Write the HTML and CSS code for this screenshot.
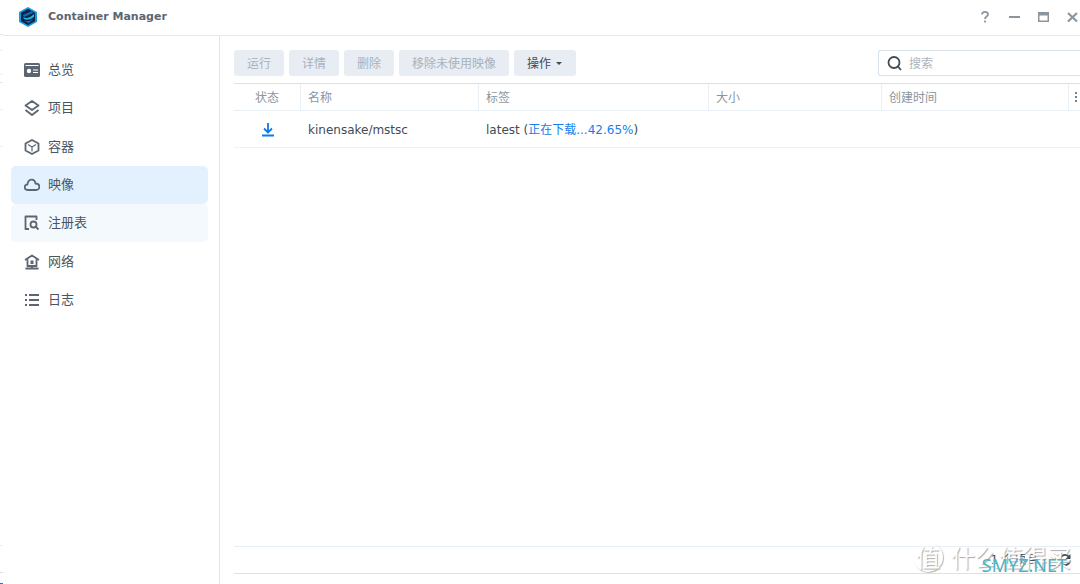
FILE: index.html
```html
<!DOCTYPE html>
<html lang="zh-CN">
<head>
<meta charset="utf-8">
<title>Container Manager</title>
<link rel="stylesheet" href="styles.css">
</head>
<body>
<div class="desktop">
  <svg class="backdrop" width="3" height="584" viewBox="0 0 3 584" aria-hidden="true">
    <path d="M0 34.500h3M0 82.500h3" stroke="#dfe9f1"/>
    <path d="M0 49.500l3 1M0 74.500l3-1M0 109.500h3M0 146.500h3M0 545.500h3" stroke="#eceff2"/>
    <path d="M0 572.500h3" stroke="#d9dfe4"/>
    <path d="M0 583.500h3" stroke="#456a9a"/>
  </svg>
  <div class="window">
    <header class="titlebar">
      <svg class="logo" width="20" height="22" viewBox="0 0 20 22" aria-hidden="true">
        <path d="M10 2l8 4.500v9L10 20l-8-4.500v-9z" fill="#063a68" stroke="#1699e0" stroke-width="2" stroke-linejoin="round"/>
        <path d="M10 3l7 4v8l-7 4-7-4V7z" fill="#0a2547"/>
        <path d="M5 9l9-4 1 2-9 4z" fill="#176ab0"/>
        <path d="M5 11q5 3 11-3v3q-5 4-10 2z" fill="#26b7df"/>
        <path d="M6 15q5 1 9-2l-4 4z" fill="#1475c4"/>
      </svg>
      <h1 class="title">Container Manager</h1>
      <div class="controls">
        <button class="control" aria-label="帮助"><svg width="12" height="14" viewBox="0 0 12 14"><path d="M3 4.500C3 1 9 1 9 4.500 9 6.500 6 6.500 6 9M6 10.500v2" fill="none" stroke="#8b959e" stroke-width="1.800"/></svg></button>
        <button class="control" aria-label="最小化"><svg width="12" height="14" viewBox="0 0 12 14"><path d="M1 7h11" stroke="#8b959e" stroke-width="2"/></svg></button>
        <button class="control" aria-label="最大化"><svg width="12" height="14" viewBox="0 0 12 14"><path d="M1 2h11v10H1z" fill="#8b959e"/><path d="M2.500 5.500h8v5h-8z" fill="#fff"/></svg></button>
        <button class="control" aria-label="关闭"><svg width="12" height="14" viewBox="0 0 12 14"><path d="M2 3l9 8.500M11 3l-9 8.500" stroke="#8b959e" stroke-width="2.200"/></svg></button>
      </div>
    </header>
    <div class="body">
      <nav class="sidebar">
        <a class="nav-item" href="#"><svg class="icon" viewBox="0 0 16 16"><rect y="1" width="16" height="14" rx="1.500" fill="#5b6672"/><path d="M1.500 3.500h13" stroke="#fff"/><circle cx="5" cy="9" r="2.200" fill="#fff"/><path d="M9 8h5M9 10.500h5" stroke="#fff"/></svg>总览</a>
        <a class="nav-item" href="#"><svg class="icon line" viewBox="0 0 16 16"><path d="M8 1l6.500 4.500L8 10 1.500 5.500zM1.500 10L8 15l6.500-5"/></svg>项目</a>
        <a class="nav-item" href="#"><svg class="icon line" viewBox="0 0 16 16"><path d="M8 1l6.500 3.500v7L8 15l-6.500-3.500v-7z"/><path d="M4 5.500L8 8l4-2.500M8 8v4.500" stroke-width="1.200"/></svg>容器</a>
        <a class="nav-item selected" href="#" aria-current="page"><svg class="icon line" viewBox="0 0 16 16"><path d="M4 13C-.3 13-.3 7.500 3.500 7.500 4 1.500 10.500 1 11.500 6.500 16.500 6.500 16.500 13 12 13z"/></svg>映像</a>
        <a class="nav-item hovered" href="#"><svg class="icon line" viewBox="0 0 16 16"><path d="M5 14H1.500V1.500h11V5"/><circle cx="9.500" cy="9.500" r="3"/><path d="M11.500 11.500l3 3"/></svg>注册表</a>
        <a class="nav-item" href="#"><svg class="icon line" viewBox="0 0 16 16"><path d="M1 6l7-4.500L15 6M3.500 5.500V12h9V5.500M1.500 14.500h13M8 12v2"/><path d="M6.500 6.500h3v3.500h-3z" fill="#5b6672" stroke="none"/></svg>网络</a>
        <a class="nav-item" href="#"><svg class="icon line" viewBox="0 0 16 16"><path d="M1 3h2M5 3h10M1 8h2M5 8h10M1 13h2M5 13h10"/></svg>日志</a>
      </nav>
      <main class="content">
        <div class="toolbar">
          <button class="btn" disabled>运行</button>
          <button class="btn" disabled>详情</button>
          <button class="btn" disabled>删除</button>
          <button class="btn" disabled>移除未使用映像</button>
          <button class="btn">操作<svg class="caret" width="6" height="3" viewBox="0 0 6 3" aria-hidden="true"><path d="M0 0h6L3 3z" fill="#414b55"/></svg></button>
          <label class="search">
            <svg width="16" height="16" viewBox="0 0 16 16" aria-hidden="true"><circle cx="7" cy="7.500" r="5.500" fill="none" stroke="#414b55" stroke-width="1.800"/><path d="M10.500 11l3.500 4" stroke="#414b55" stroke-width="1.800"/></svg>
            <input class="search-input" type="text" placeholder="搜索" aria-label="搜索">
          </label>
        </div>
        <table class="images">
          <colgroup><col class="col-status"><col class="col-name"><col class="col-tag"><col class="col-size"><col><col class="col-menu"></colgroup>
          <thead>
            <tr><th class="status">状态</th><th>名称</th><th>标签</th><th>大小</th><th>创建时间</th><th class="menu"><button class="more" aria-label="更多列"><svg width="4" height="12" viewBox="0 0 4 12"><path d="M0 1h2v2H0zM0 5h2v2H0zM0 9h2v2H0z" fill="#75808a"/></svg></button></th></tr>
          </thead>
          <tbody>
            <tr><td class="status"><svg class="download" width="14" height="14" viewBox="0 0 14 14" role="img" aria-label="下载中"><path d="M7 0v9M3 5.500l4 4 4-4M1 12.500h12" fill="none" stroke="#0c7bea" stroke-width="1.800"/></svg></td><td>kinensake/mstsc</td><td>latest (<span class="progress">正在下载...42.65%</span>)</td><td></td><td></td><td></td></tr>
          </tbody>
        </table>
        <footer class="footer">
          <span>1 个项目</span>
          <button class="refresh" aria-label="刷新"><svg width="14" height="14" viewBox="0 0 14 14"><path d="M2 6.500A5 5 0 0 1 11 4M12 7.500A5 5 0 0 1 3 10" fill="none" stroke="#414b55" stroke-width="1.800"/><path d="M12.500 1v5h-5zM1.500 13V8h5z" fill="#414b55"/></svg></button>
        </footer>
      </main>
    </div>
  </div>
  <div class="watermark"><span class="seal">值</span><span>什么值得买</span></div>
  <div class="site">SMYZ.NET</div>
</div>
</body>
</html>
```

FILE: styles.css
```css
* { box-sizing: border-box; }

body {
  margin: 0;
  background: #fff;
  color: #414b55;
  font: 12px/18px "DejaVu Sans", "Noto Sans CJK SC", sans-serif;
}

button, input { font: inherit; color: inherit; }
button { border: 0; padding: 0; background: none; }

.desktop {
  position: relative;
  display: flex;
  height: 100vh;
  overflow: hidden;
}

.backdrop { flex: none; }

.window {
  flex: 1;
  min-width: 0;
  display: flex;
  flex-direction: column;
}

.titlebar {
  display: flex;
  align-items: center;
  height: 36px;
  padding: 0 2px 1px 15px;
  border-bottom: 1px solid #e3ebf2;
}

.title {
  margin: 0 0 0 10px;
  font-size: 11px;
  font-weight: bold;
  color: #5b6672;
}

.controls {
  display: flex;
  gap: 17px;
  margin-left: auto;
}

.control { display: flex; }

.body {
  flex: 1;
  min-height: 0;
  display: flex;
}

.sidebar {
  flex: none;
  display: grid;
  grid-template-rows: repeat(7, 1fr);
  align-content: start;
  width: 217px;
  padding: 15px 11px 265px 8px;
  border-right: 1px solid #dde7ef;
}

.nav-item {
  display: flex;
  align-items: center;
  gap: 8px;
  padding-left: 13px;
  border-radius: 5px;
  font-size: 13px;
  color: #4b555f;
  text-decoration: none;
}

.selected { background: #e3f0fd; }
.hovered { background: #f4f9fe; }

.icon { width: 16px; height: 16px; }

.line {
  fill: none;
  stroke: #5b6672;
  stroke-width: 1.8;
  stroke-linejoin: round;
}

.content {
  flex: 1;
  min-width: 0;
  display: flex;
  flex-direction: column;
  padding: 14px 0 10px 14px;
}

.toolbar {
  display: flex;
  gap: 5px;
  padding-bottom: 7px;
}

.btn {
  height: 26px;
  padding: 2px 13px 0;
  border-radius: 3px;
  background: #e7edf3;
}

.btn:disabled { color: #a9b2bb; }

.caret { margin: 0 1px 2px 5px; vertical-align: middle; }

.search {
  display: flex;
  align-items: center;
  gap: 6px;
  width: 202px;
  height: 26px;
  margin-left: auto;
  padding-left: 8px;
  border: 1px solid #d7e1ea;
  border-right: 0;
  border-radius: 3px 0 0 3px;
}

.search-input {
  flex: 1;
  min-width: 0;
  padding: 2px 0 0;
  border: 0;
  outline: 0;
  background: none;
}

.search-input::placeholder { color: #adb5bd; }

.images {
  width: 100%;
  table-layout: fixed;
  border-collapse: separate;
  border-spacing: 0;
  border-top: 1px solid #d7e3ec;
}

.col-status { width: 67px; }
.col-name { width: 178px; }
.col-tag { width: 230px; }
.col-size { width: 173px; }
.col-menu { width: 11px; }

.images th {
  height: 27px;
  padding: 2px 0 0 7px;
  border-right: 1px solid #e8eff5;
  border-bottom: 1px solid #e8eff5;
  font-weight: normal;
  text-align: left;
  color: #8b959e;
}

.images td {
  height: 37px;
  padding: 2px 0 0 7px;
  border-bottom: 1px solid #edf1f4;
}

.images .status { padding-left: 0; text-align: center; }
.images .menu { padding: 0 0 0 6px; border-right: 0; }

.more, .refresh { display: flex; }
.download { display: block; margin: 0 auto; }
.progress { color: #1480ee; }

.footer {
  display: flex;
  align-items: center;
  justify-content: flex-end;
  gap: 20px;
  height: 28px;
  margin-top: auto;
  padding-right: 8px;
  border-top: 1px solid #e6eff5;
  border-bottom: 1px solid #d7e3ea;
}

.watermark {
  position: absolute;
  right: 9px;
  bottom: 12px;
  display: flex;
  align-items: center;
  gap: 8px;
  font: 24px/30px "Noto Sans CJK SC", sans-serif;
  color: #fff;
  text-shadow: 1px 1px 1px #aaa;
}

.seal {
  width: 30px;
  border-radius: 50%;
  text-align: center;
  box-shadow: 1px 1px 1px #bbb;
}

.site {
  position: absolute;
  right: 13px;
  bottom: 8px;
  font: 18px/22px "Noto Sans", sans-serif;
  color: #4fb0c2;
}
```
